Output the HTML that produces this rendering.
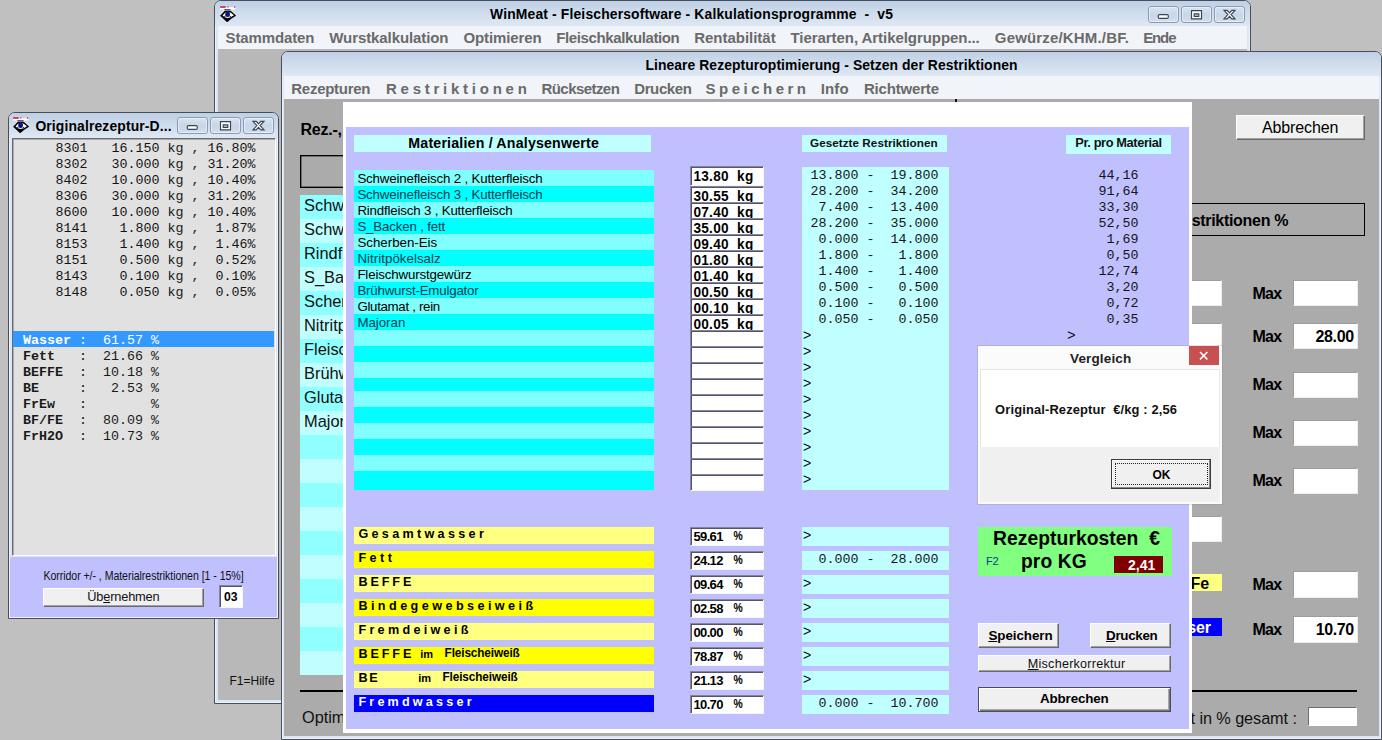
<!DOCTYPE html>
<html lang="de">
<head>
<meta charset="utf-8">
<title>WinMeat - Fleischersoftware - Kalkulationsprogramme - v5</title>
<style>
html,body{margin:0;padding:0}
body{width:1382px;height:740px;overflow:hidden;background:#c0c0c0;position:relative;font-family:"Liberation Sans",sans-serif}
div,span.t,svg{position:absolute;box-sizing:border-box}
.t{white-space:pre;line-height:1;font-family:"Liberation Sans",sans-serif}
.m{font-family:"Liberation Mono",monospace}
.win{border:1px solid #474e5c;border-radius:7px 7px 0 0;background:#dbe6f4;box-shadow:inset 0 0 0 1px #eef3fa}
.wb{border:1px solid #8a9cb5;border-radius:3px;background:linear-gradient(#d9e4f1,#c8d6e8 50%,#d2deed);box-shadow:inset 0 0 0 1px rgba(255,255,255,.45)}
.inp{background:#fff;border:1px solid;border-color:#85859c #f6f6fa #f6f6fa #85859c;box-shadow:inset 1px 1px 0 #55556a}
.fl{background:#fff;border:1px solid;border-color:#9c9c9c #ececec #ececec #9c9c9c}
.btn{background:#f0f0f0;border:1px solid;border-color:#fff #6a6a6a #6a6a6a #fff;box-shadow:inset -1px -1px 0 #a0a0a0}
u{text-decoration:underline}

</style>
</head>
<body>
<div id="win-main" style="left:0;top:0">
<div class="win" style="left:214px;top:0;width:1037px;height:704px"></div>
<div style="left:215px;top:1px;width:1035px;height:25px;background:linear-gradient(#bfd0e5,#dfe8f4);border-radius:6px 6px 0 0"></div>
<div style="left:218px;top:26px;width:1029px;height:23px;background:#f1f4f9;"></div>
<div style="left:218px;top:49px;width:1029px;height:651px;background:#b8b8b8;"></div>
<svg style="left:219.6px;top:5.5px" width="16.4" height="16.4" viewBox="0 0 16.4 16.4"><rect x="0" y="1.3" width="15.4" height="2.3" fill="#fff"/><path d="M0.1 1h5.6M7.4 0.8h1.1" stroke="#cf1230" stroke-width="1.3"/><path d="M14.7 0.2v1.7" stroke="#cf1230" stroke-width="0.9"/><rect x="4.3" y="3.4" width="6.2" height="1" fill="#000"/><path d="M0.1 9.7 L4.6 4.9 L11 4.9 L16.2 9.7 L11 13 L7.2 16.3 L3.6 13Z" fill="#000"/><path d="M2.6 9.6 Q4.5 6.3 7.5 5.7 Q11 6.2 13.9 9.2 Q11 11.7 7.4 11.9 Q4.6 11.8 2.6 9.6Z" fill="#fff"/><path d="M1.2 7.2l1.1-1.1M3.3 5l1-1M12.2 4.6l1 1M14.2 6.6l1 1" stroke="#dbe5f2" stroke-width="1.1"/><ellipse cx="7.6" cy="8.3" rx="2.4" ry="2.8" fill="#10108c"/><path d="M4.2 10.4h1.2M9.8 10.6h1.3" stroke="#000" stroke-width="0.9"/></svg>
<span class="t" style="left:490px;top:8.33px;font-size:13.9px;font-weight:700;letter-spacing:0.152px;">WinMeat - Fleischersoftware - Kalkulationsprogramme  -  v5</span>
<div class="wb" style="left:1148px;top:5.8px;width:31px;height:17px"></div>
<div class="wb" style="left:1181px;top:5.8px;width:31px;height:17px"></div>
<div class="wb" style="left:1214px;top:5.8px;width:31px;height:17px"></div>
<svg style="left:1148px;top:5.8px" width="97" height="17" viewBox="0 0 97 17"><rect x="10.3" y="8.6" width="10" height="3.8" rx="1.2" stroke="#3a4452" stroke-width="1.15" fill="#fff"/><path d="M43.5 4.6h10v8.2h-10z M46.2 7.8v2.6h4.6v-2.6z" fill-rule="evenodd" stroke="#3a4452" stroke-width="1.15" fill="#fff"/><path d="M76 4.4h3.2l2.3 2.5l2.3-2.5h3.2l-3.9 4.2l3.9 4.2h-3.2l-2.3-2.5l-2.3 2.5h-3.2l3.9-4.2z" stroke="#3a4452" stroke-width="1.15" fill="#fff"/></svg>
<span class="t" style="left:225.5px;top:30.00px;font-size:15px;font-weight:700;color:#6a6a6a;letter-spacing:-0.115px;">Stammdaten</span>
<span class="t" style="left:329.3px;top:30.00px;font-size:15px;font-weight:700;color:#6a6a6a;letter-spacing:-0.093px;">Wurstkalkulation</span>
<span class="t" style="left:463.5px;top:30.00px;font-size:15px;font-weight:700;color:#6a6a6a;letter-spacing:-0.110px;">Optimieren</span>
<span class="t" style="left:556.2px;top:30.00px;font-size:15px;font-weight:700;color:#6a6a6a;letter-spacing:-0.379px;">Fleischkalkulation</span>
<span class="t" style="left:694.2px;top:30.00px;font-size:15px;font-weight:700;color:#6a6a6a;letter-spacing:-0.017px;">Rentabilität</span>
<span class="t" style="left:790.5px;top:30.00px;font-size:15px;font-weight:700;color:#6a6a6a;letter-spacing:-0.059px;">Tierarten, Artikelgruppen...</span>
<span class="t" style="left:994.8px;top:30.00px;font-size:15px;font-weight:700;color:#6a6a6a;letter-spacing:0.168px;">Gewürze/KHM./BF.</span>
<span class="t" style="left:1143.2px;top:30.00px;font-size:15px;font-weight:700;color:#6a6a6a;letter-spacing:-1.129px;">Ende</span>
<span class="t" style="left:229.4px;top:674.94px;font-size:12px;color:#111;letter-spacing:0.024px;">F1=Hilfe</span>
</div>
<div id="win-optimierung" style="left:0;top:0">
<div class="win" style="left:281px;top:50.8px;width:1100.6px;height:689.2px"></div>
<div style="left:282px;top:51.8px;width:1098.6px;height:24.2px;background:linear-gradient(#bfd0e5,#dfe8f4);border-radius:6px 6px 0 0"></div>
<div style="left:284px;top:76px;width:1094.6px;height:23px;background:#f1f4f9;"></div>
<div style="left:284px;top:99px;width:1094.6px;height:637.4px;background:#ababab;"></div>
<span class="t" style="left:645.4px;top:58.93px;font-size:13.9px;font-weight:700;letter-spacing:0.074px;">Lineare Rezepturoptimierung - Setzen der Restriktionen</span>
<span class="t" style="left:291.3px;top:80.50px;font-size:15px;font-weight:700;color:#6a6a6a;letter-spacing:-0.276px;">Rezepturen</span>
<span class="t" style="left:386px;top:80.50px;font-size:15px;font-weight:700;color:#6a6a6a;letter-spacing:-0.211px;">R e s t r i k t i o n e n</span>
<span class="t" style="left:541.5px;top:80.50px;font-size:15px;font-weight:700;color:#6a6a6a;letter-spacing:-0.564px;">Rücksetzen</span>
<span class="t" style="left:634.2px;top:80.50px;font-size:15px;font-weight:700;color:#6a6a6a;letter-spacing:-0.372px;">Drucken</span>
<span class="t" style="left:705.5px;top:80.50px;font-size:15px;font-weight:700;color:#6a6a6a;letter-spacing:-0.336px;">S p e i c h e r n</span>
<span class="t" style="left:820.7px;top:80.50px;font-size:15px;font-weight:700;color:#6a6a6a;letter-spacing:0.133px;">Info</span>
<span class="t" style="left:863.9px;top:80.50px;font-size:15px;font-weight:700;color:#6a6a6a;letter-spacing:-0.176px;">Richtwerte</span>
<div style="left:955px;top:99px;width:2px;height:3px;background:#111;"></div>
<span class="t" style="left:300.4px;top:122.36px;font-size:16px;font-weight:700;letter-spacing:-0.214px;">Rez.-,</span>
<div class="btn" style="left:1236px;top:115px;width:129px;height:25px"></div>
<span class="t" style="left:1262px;top:119.86px;font-size:16px;letter-spacing:-0.136px;">Abbrechen</span>
<div style="left:300px;top:155px;width:700px;height:33px;background:transparent;border:1px solid #000;box-shadow:inset 0 0 0 0.5px #333"></div>
<div style="left:300px;top:195px;width:600px;height:24px;background:#90ffff;"></div>
<span class="t" style="left:304px;top:196.82px;font-size:16.4px;color:#111;">Schweinefleisch 2 , Kutterfleisch</span>
<div style="left:300px;top:219px;width:600px;height:24px;background:#c0ffff;"></div>
<span class="t" style="left:304px;top:220.82px;font-size:16.4px;color:#111;">Schweinefleisch 3 , Kutterfleisch</span>
<div style="left:300px;top:243px;width:600px;height:24px;background:#90ffff;"></div>
<span class="t" style="left:304px;top:244.82px;font-size:16.4px;color:#111;">Rindfleisch 3 , Kutterfleisch</span>
<div style="left:300px;top:267px;width:600px;height:24px;background:#c0ffff;"></div>
<span class="t" style="left:304px;top:268.82px;font-size:16.4px;color:#111;">S_Backen , fett</span>
<div style="left:300px;top:291px;width:600px;height:24px;background:#90ffff;"></div>
<span class="t" style="left:304px;top:292.82px;font-size:16.4px;color:#111;">Scherben-Eis</span>
<div style="left:300px;top:315px;width:600px;height:24px;background:#c0ffff;"></div>
<span class="t" style="left:304px;top:316.82px;font-size:16.4px;color:#111;">Nitritpökelsalz</span>
<div style="left:300px;top:339px;width:600px;height:24px;background:#90ffff;"></div>
<span class="t" style="left:304px;top:340.82px;font-size:16.4px;color:#111;">Fleischwurstgewürz</span>
<div style="left:300px;top:363px;width:600px;height:24px;background:#c0ffff;"></div>
<span class="t" style="left:304px;top:364.82px;font-size:16.4px;color:#111;">Brühwurst-Emulgator</span>
<div style="left:300px;top:387px;width:600px;height:24px;background:#90ffff;"></div>
<span class="t" style="left:304px;top:388.82px;font-size:16.4px;color:#111;">Glutamat , rein</span>
<div style="left:300px;top:411px;width:600px;height:24px;background:#c0ffff;"></div>
<span class="t" style="left:304px;top:412.82px;font-size:16.4px;color:#111;">Majoran</span>
<div style="left:300px;top:435px;width:600px;height:24px;background:#90ffff;"></div>
<div style="left:300px;top:459px;width:600px;height:24px;background:#c0ffff;"></div>
<div style="left:300px;top:483px;width:600px;height:24px;background:#90ffff;"></div>
<div style="left:300px;top:507px;width:600px;height:24px;background:#c0ffff;"></div>
<div style="left:300px;top:531px;width:600px;height:24px;background:#90ffff;"></div>
<div style="left:300px;top:555px;width:600px;height:24px;background:#c0ffff;"></div>
<div style="left:300px;top:579px;width:600px;height:24px;background:#90ffff;"></div>
<div style="left:300px;top:603px;width:600px;height:24px;background:#c0ffff;"></div>
<div style="left:300px;top:627px;width:600px;height:24px;background:#90ffff;"></div>
<div style="left:300px;top:651px;width:600px;height:24px;background:#c0ffff;"></div>
<div style="left:900px;top:203px;width:465px;height:33px;background:transparent;border:1px solid #000"></div>
<span class="t" style="left:1171.8px;top:213.06px;font-size:16px;font-weight:700;letter-spacing:-0.302px;">Restriktionen %</span>
<div class="fl" style="left:1157px;top:280.3px;width:64.5px;height:26px"></div>
<span class="t" style="left:1252.4px;top:285.86px;font-size:16px;font-weight:700;letter-spacing:-0.663px;">Max</span>
<div class="fl" style="left:1292.6px;top:280.3px;width:65px;height:26px"></div>
<div class="fl" style="left:1157px;top:323.3px;width:64.5px;height:26px"></div>
<span class="t" style="left:1252.4px;top:328.86px;font-size:16px;font-weight:700;letter-spacing:-0.663px;">Max</span>
<div class="fl" style="left:1292.6px;top:323.3px;width:65px;height:26px"></div>
<div class="fl" style="left:1157px;top:371.6px;width:64.5px;height:26px"></div>
<span class="t" style="left:1252.4px;top:376.86px;font-size:16px;font-weight:700;letter-spacing:-0.663px;">Max</span>
<div class="fl" style="left:1292.6px;top:371.6px;width:65px;height:26px"></div>
<div class="fl" style="left:1157px;top:419.8px;width:64.5px;height:26px"></div>
<span class="t" style="left:1252.4px;top:424.86px;font-size:16px;font-weight:700;letter-spacing:-0.663px;">Max</span>
<div class="fl" style="left:1292.6px;top:419.8px;width:65px;height:26px"></div>
<div class="fl" style="left:1157px;top:467.6px;width:64.5px;height:26px"></div>
<span class="t" style="left:1252.4px;top:472.86px;font-size:16px;font-weight:700;letter-spacing:-0.663px;">Max</span>
<div class="fl" style="left:1292.6px;top:467.6px;width:65px;height:26px"></div>
<div class="fl" style="left:1157px;top:515.5px;width:64.5px;height:26px"></div>
<span class="t" style="left:1315.5px;top:328.86px;font-size:16px;font-weight:700;letter-spacing:-0.337px;">28.00</span>
<div style="left:1100px;top:573.5px;width:121.5px;height:17.5px;background:#ffff80;"></div>
<span class="t" style="left:1190.6px;top:575.96px;font-size:16px;font-weight:700;">Fe</span>
<div style="left:1100px;top:618.4px;width:121.5px;height:17.4px;background:#0000ff;"></div>
<span class="t" style="left:1109px;top:620.06px;font-size:16px;font-weight:700;color:#fff;letter-spacing:-0.117px;">Fremdwasser</span>
<span class="t" style="left:1252.4px;top:576.76px;font-size:16px;font-weight:700;letter-spacing:-0.663px;">Max</span>
<div class="fl" style="left:1292.6px;top:571px;width:65px;height:27px"></div>
<span class="t" style="left:1252.4px;top:621.66px;font-size:16px;font-weight:700;letter-spacing:-0.663px;">Max</span>
<div class="fl" style="left:1292.6px;top:616px;width:65px;height:27px"></div>
<span class="t" style="left:1315.7px;top:621.66px;font-size:16px;font-weight:700;letter-spacing:-0.387px;">10.70</span>
<div style="left:300px;top:690px;width:1057px;height:2.4px;background:#000;"></div>
<span class="t" style="left:302px;top:709.20px;font-size:16.3px;color:#111;">Optim</span>
<span class="t" style="left:1190.5px;top:709.60px;font-size:16.3px;color:#111;letter-spacing:-0.085px;">t in % gesamt :</span>
<div class="fl" style="left:1308px;top:707.4px;width:49px;height:18.4px;border-color:#6e6e6e #fff #fff #6e6e6e"></div>
</div>
<div id="panel-restriktionen" style="left:0;top:0">
<div style="left:343px;top:102px;width:849px;height:631px;background:#fff;"></div>
<div style="left:346px;top:127px;width:843px;height:602.4px;background:#c0c0ff;"></div>
<div style="left:354px;top:135px;width:297px;height:16.8px;background:#c0ffff;"></div>
<span class="t" style="left:408.3px;top:136.38px;font-size:14.2px;font-weight:700;letter-spacing:0.190px;">Materialien / Analysenwerte</span>
<div style="left:802px;top:135px;width:145px;height:17px;background:#c0ffff;"></div>
<span class="t" style="left:810px;top:136.70px;font-size:11.7px;font-weight:700;color:#111;letter-spacing:0.045px;">Gesetzte Restriktionen</span>
<div style="left:1066px;top:135px;width:105px;height:18.5px;background:#c0ffff;"></div>
<span class="t" style="left:1075.3px;top:136.96px;font-size:12.8px;font-weight:700;color:#111;letter-spacing:-0.384px;">Pr. pro Material</span>
<div style="left:354px;top:170px;width:300px;height:16px;background:#80ffff;"></div>
<span class="t" style="left:357.4px;top:171.84px;font-size:13.3px;letter-spacing:-0.171px;">Schweinefleisch 2 , Kutterfleisch</span>
<div style="left:354px;top:186px;width:300px;height:16px;background:#00ffff;"></div>
<span class="t" style="left:357.4px;top:187.84px;font-size:13.3px;color:#053a52;letter-spacing:-0.171px;">Schweinefleisch 3 , Kutterfleisch</span>
<div style="left:354px;top:202px;width:300px;height:16px;background:#80ffff;"></div>
<span class="t" style="left:357.4px;top:203.84px;font-size:13.3px;letter-spacing:-0.181px;">Rindfleisch 3 , Kutterfleisch</span>
<div style="left:354px;top:218px;width:300px;height:16px;background:#00ffff;"></div>
<span class="t" style="left:357.4px;top:219.84px;font-size:13.3px;color:#053a52;letter-spacing:-0.163px;">S_Backen , fett</span>
<div style="left:354px;top:234px;width:300px;height:16px;background:#80ffff;"></div>
<span class="t" style="left:357.4px;top:235.84px;font-size:13.3px;">Scherben-Eis</span>
<div style="left:354px;top:250px;width:300px;height:16px;background:#00ffff;"></div>
<span class="t" style="left:357.4px;top:251.84px;font-size:13.3px;color:#053a52;letter-spacing:0.038px;">Nitritpökelsalz</span>
<div style="left:354px;top:266px;width:300px;height:16px;background:#80ffff;"></div>
<span class="t" style="left:357.4px;top:267.84px;font-size:13.3px;letter-spacing:-0.151px;">Fleischwurstgewürz</span>
<div style="left:354px;top:282px;width:300px;height:16px;background:#00ffff;"></div>
<span class="t" style="left:357.4px;top:283.84px;font-size:13.3px;color:#053a52;letter-spacing:-0.199px;">Brühwurst-Emulgator</span>
<div style="left:354px;top:298px;width:300px;height:16px;background:#80ffff;"></div>
<span class="t" style="left:357.4px;top:299.84px;font-size:13.3px;letter-spacing:-0.315px;">Glutamat , rein</span>
<div style="left:354px;top:314px;width:300px;height:16px;background:#00ffff;"></div>
<span class="t" style="left:357.4px;top:315.84px;font-size:13.3px;color:#053a52;letter-spacing:-0.024px;">Majoran</span>
<div style="left:354px;top:330px;width:300px;height:16px;background:#80ffff;"></div>
<div style="left:354px;top:346px;width:300px;height:16px;background:#00ffff;"></div>
<div style="left:354px;top:362px;width:300px;height:16px;background:#80ffff;"></div>
<div style="left:354px;top:378px;width:300px;height:12.8px;background:#00ffff;"></div>
<div style="left:354px;top:390.8px;width:300px;height:16px;background:#80ffff;"></div>
<div style="left:354px;top:406.8px;width:300px;height:16px;background:#00ffff;"></div>
<div style="left:354px;top:422.8px;width:300px;height:16px;background:#80ffff;"></div>
<div style="left:354px;top:438.8px;width:300px;height:16px;background:#00ffff;"></div>
<div style="left:354px;top:454.8px;width:300px;height:16px;background:#80ffff;"></div>
<div style="left:354px;top:470.8px;width:300px;height:19.2px;background:#00ffff;"></div>
<div class="inp" style="left:690.4px;top:166px;width:73.2px;height:20px;overflow:hidden"></div>
<span class="t" style="left:693.4px;top:169.79px;font-size:13.6px;font-weight:700;letter-spacing:0.295px;transform-origin:0 11.51px;transform:scaleY(1.1);">13.80  kg</span>
<div class="inp" style="left:690.4px;top:186px;width:73.2px;height:19px;overflow:hidden"></div>
<span class="t" style="left:693.4px;top:189.79px;font-size:13.6px;font-weight:700;letter-spacing:0.295px;transform-origin:0 11.51px;transform:scaleY(1.1);">30.55  kg</span>
<div class="inp" style="left:690.4px;top:202px;width:73.2px;height:19px;overflow:hidden"></div>
<span class="t" style="left:693.4px;top:205.79px;font-size:13.6px;font-weight:700;letter-spacing:0.295px;transform-origin:0 11.51px;transform:scaleY(1.1);">07.40  kg</span>
<div class="inp" style="left:690.4px;top:218px;width:73.2px;height:19px;overflow:hidden"></div>
<span class="t" style="left:693.4px;top:221.79px;font-size:13.6px;font-weight:700;letter-spacing:0.295px;transform-origin:0 11.51px;transform:scaleY(1.1);">35.00  kg</span>
<div class="inp" style="left:690.4px;top:234px;width:73.2px;height:19px;overflow:hidden"></div>
<span class="t" style="left:693.4px;top:237.79px;font-size:13.6px;font-weight:700;letter-spacing:0.295px;transform-origin:0 11.51px;transform:scaleY(1.1);">09.40  kg</span>
<div class="inp" style="left:690.4px;top:250px;width:73.2px;height:19px;overflow:hidden"></div>
<span class="t" style="left:693.4px;top:253.79px;font-size:13.6px;font-weight:700;letter-spacing:0.295px;transform-origin:0 11.51px;transform:scaleY(1.1);">01.80  kg</span>
<div class="inp" style="left:690.4px;top:266px;width:73.2px;height:19px;overflow:hidden"></div>
<span class="t" style="left:693.4px;top:269.79px;font-size:13.6px;font-weight:700;letter-spacing:0.295px;transform-origin:0 11.51px;transform:scaleY(1.1);">01.40  kg</span>
<div class="inp" style="left:690.4px;top:282px;width:73.2px;height:19px;overflow:hidden"></div>
<span class="t" style="left:693.4px;top:285.79px;font-size:13.6px;font-weight:700;letter-spacing:0.295px;transform-origin:0 11.51px;transform:scaleY(1.1);">00.50  kg</span>
<div class="inp" style="left:690.4px;top:298px;width:73.2px;height:19px;overflow:hidden"></div>
<span class="t" style="left:693.4px;top:301.79px;font-size:13.6px;font-weight:700;letter-spacing:0.295px;transform-origin:0 11.51px;transform:scaleY(1.1);">00.10  kg</span>
<div class="inp" style="left:690.4px;top:314px;width:73.2px;height:19px;overflow:hidden"></div>
<span class="t" style="left:693.4px;top:317.79px;font-size:13.6px;font-weight:700;letter-spacing:0.295px;transform-origin:0 11.51px;transform:scaleY(1.1);">00.05  kg</span>
<div class="inp" style="left:690.4px;top:330px;width:73.2px;height:19px;overflow:hidden"></div>
<div class="inp" style="left:690.4px;top:346px;width:73.2px;height:19px;overflow:hidden"></div>
<div class="inp" style="left:690.4px;top:362px;width:73.2px;height:19px;overflow:hidden"></div>
<div class="inp" style="left:690.4px;top:378px;width:73.2px;height:19px;overflow:hidden"></div>
<div class="inp" style="left:690.4px;top:394px;width:73.2px;height:19px;overflow:hidden"></div>
<div class="inp" style="left:690.4px;top:410px;width:73.2px;height:19px;overflow:hidden"></div>
<div class="inp" style="left:690.4px;top:426px;width:73.2px;height:19px;overflow:hidden"></div>
<div class="inp" style="left:690.4px;top:442px;width:73.2px;height:19px;overflow:hidden"></div>
<div class="inp" style="left:690.4px;top:458px;width:73.2px;height:19px;overflow:hidden"></div>
<div class="inp" style="left:690.4px;top:474px;width:73.2px;height:16.6px;overflow:hidden"></div>
<div style="left:802px;top:166.7px;width:147px;height:322.9px;background:#c0ffff;"></div>
<span class="t m" style="left:802.5px;top:168.78px;font-size:13.333px;color:#151515;"> 13.800 -  19.800</span>
<span class="t m" style="left:1098.6px;top:168.78px;font-size:13.333px;color:#151515;">44,16</span>
<span class="t m" style="left:802.5px;top:184.78px;font-size:13.333px;color:#151515;"> 28.200 -  34.200</span>
<span class="t m" style="left:1098.6px;top:184.78px;font-size:13.333px;color:#151515;">91,64</span>
<span class="t m" style="left:802.5px;top:200.78px;font-size:13.333px;color:#151515;">  7.400 -  13.400</span>
<span class="t m" style="left:1098.6px;top:200.78px;font-size:13.333px;color:#151515;">33,30</span>
<span class="t m" style="left:802.5px;top:216.78px;font-size:13.333px;color:#151515;"> 28.200 -  35.000</span>
<span class="t m" style="left:1098.6px;top:216.78px;font-size:13.333px;color:#151515;">52,50</span>
<span class="t m" style="left:802.5px;top:232.78px;font-size:13.333px;color:#151515;">  0.000 -  14.000</span>
<span class="t m" style="left:1098.6px;top:232.78px;font-size:13.333px;color:#151515;"> 1,69</span>
<span class="t m" style="left:802.5px;top:248.78px;font-size:13.333px;color:#151515;">  1.800 -   1.800</span>
<span class="t m" style="left:1098.6px;top:248.78px;font-size:13.333px;color:#151515;"> 0,50</span>
<span class="t m" style="left:802.5px;top:264.78px;font-size:13.333px;color:#151515;">  1.400 -   1.400</span>
<span class="t m" style="left:1098.6px;top:264.78px;font-size:13.333px;color:#151515;">12,74</span>
<span class="t m" style="left:802.5px;top:280.78px;font-size:13.333px;color:#151515;">  0.500 -   0.500</span>
<span class="t m" style="left:1098.6px;top:280.78px;font-size:13.333px;color:#151515;"> 3,20</span>
<span class="t m" style="left:802.5px;top:296.78px;font-size:13.333px;color:#151515;">  0.100 -   0.100</span>
<span class="t m" style="left:1098.6px;top:296.78px;font-size:13.333px;color:#151515;"> 0,72</span>
<span class="t m" style="left:802.5px;top:312.78px;font-size:13.333px;color:#151515;">  0.050 -   0.050</span>
<span class="t m" style="left:1098.6px;top:312.78px;font-size:13.333px;color:#151515;"> 0,35</span>
<span class="t m" style="left:802.8px;top:328.69px;font-size:14.5px;color:#111;">&gt;</span>
<span class="t m" style="left:802.8px;top:344.69px;font-size:14.5px;color:#111;">&gt;</span>
<span class="t m" style="left:802.8px;top:360.69px;font-size:14.5px;color:#111;">&gt;</span>
<span class="t m" style="left:802.8px;top:376.69px;font-size:14.5px;color:#111;">&gt;</span>
<span class="t m" style="left:802.8px;top:392.69px;font-size:14.5px;color:#111;">&gt;</span>
<span class="t m" style="left:802.8px;top:408.69px;font-size:14.5px;color:#111;">&gt;</span>
<span class="t m" style="left:802.8px;top:424.69px;font-size:14.5px;color:#111;">&gt;</span>
<span class="t m" style="left:802.8px;top:440.69px;font-size:14.5px;color:#111;">&gt;</span>
<span class="t m" style="left:802.8px;top:456.69px;font-size:14.5px;color:#111;">&gt;</span>
<span class="t m" style="left:802.8px;top:472.69px;font-size:14.5px;color:#111;">&gt;</span>
<span class="t m" style="left:1067px;top:328.69px;font-size:14.5px;color:#111;">&gt;</span>
<div style="left:354px;top:527px;width:300px;height:17.2px;background:#ffff80;"></div>
<span class="t" style="left:358.4px;top:527.73px;font-size:12.6px;font-weight:700;letter-spacing:-0.091px;">G e s a m t w a s s e r</span>
<div class="inp" style="left:690px;top:527.3px;width:74px;height:18.6px"></div>
<span class="t" style="left:693.5px;top:529.90px;font-size:13px;font-weight:700;letter-spacing:-0.662px;">59.61</span>
<span class="t" style="left:733.6px;top:532.10px;font-size:10.4px;font-weight:700;letter-spacing:-0.450px;transform-origin:0 8.80px;transform:scaleY(1.15);">%</span>
<div style="left:802px;top:526.7px;width:147px;height:19.3px;background:#c0ffff;"></div>
<span class="t m" style="left:802.8px;top:529.29px;font-size:14.5px;color:#111;">&gt;</span>
<div style="left:354px;top:551px;width:300px;height:17.2px;background:#ffff00;"></div>
<span class="t" style="left:358.4px;top:551.73px;font-size:12.6px;font-weight:700;">F e t t</span>
<div class="inp" style="left:690px;top:551.3px;width:74px;height:18.6px"></div>
<span class="t" style="left:693.5px;top:553.90px;font-size:13px;font-weight:700;letter-spacing:-0.662px;">24.12</span>
<span class="t" style="left:733.6px;top:556.10px;font-size:10.4px;font-weight:700;letter-spacing:-0.450px;transform-origin:0 8.80px;transform:scaleY(1.15);">%</span>
<div style="left:802px;top:550.7px;width:147px;height:19.3px;background:#c0ffff;"></div>
<span class="t m" style="left:802.5px;top:552.78px;font-size:13.333px;color:#151515;">  0.000 -  28.000</span>
<div style="left:354px;top:575px;width:300px;height:17.2px;background:#ffff80;"></div>
<span class="t" style="left:358.4px;top:575.73px;font-size:12.6px;font-weight:700;letter-spacing:-0.298px;">B E F F E</span>
<div class="inp" style="left:690px;top:575.3px;width:74px;height:18.6px"></div>
<span class="t" style="left:693.5px;top:577.90px;font-size:13px;font-weight:700;letter-spacing:-0.662px;">09.64</span>
<span class="t" style="left:733.6px;top:580.10px;font-size:10.4px;font-weight:700;letter-spacing:-0.450px;transform-origin:0 8.80px;transform:scaleY(1.15);">%</span>
<div style="left:802px;top:574.7px;width:147px;height:19.3px;background:#c0ffff;"></div>
<span class="t m" style="left:802.8px;top:577.29px;font-size:14.5px;color:#111;">&gt;</span>
<div style="left:354px;top:599px;width:300px;height:17.2px;background:#ffff00;"></div>
<span class="t" style="left:358.4px;top:599.73px;font-size:12.6px;font-weight:700;letter-spacing:-0.027px;">B i n d e g e w e b s e i w e i ß</span>
<div class="inp" style="left:690px;top:599.3px;width:74px;height:18.6px"></div>
<span class="t" style="left:693.5px;top:601.90px;font-size:13px;font-weight:700;letter-spacing:-0.662px;">02.58</span>
<span class="t" style="left:733.6px;top:604.10px;font-size:10.4px;font-weight:700;letter-spacing:-0.450px;transform-origin:0 8.80px;transform:scaleY(1.15);">%</span>
<div style="left:802px;top:598.7px;width:147px;height:19.3px;background:#c0ffff;"></div>
<span class="t m" style="left:802.8px;top:601.29px;font-size:14.5px;color:#111;">&gt;</span>
<div style="left:354px;top:623px;width:300px;height:17.2px;background:#ffff80;"></div>
<span class="t" style="left:358.4px;top:623.73px;font-size:12.6px;font-weight:700;letter-spacing:-0.099px;">F r e m d e i w e i ß</span>
<div class="inp" style="left:690px;top:623.3px;width:74px;height:18.6px"></div>
<span class="t" style="left:693.5px;top:625.90px;font-size:13px;font-weight:700;letter-spacing:-0.662px;">00.00</span>
<span class="t" style="left:733.6px;top:628.10px;font-size:10.4px;font-weight:700;letter-spacing:-0.450px;transform-origin:0 8.80px;transform:scaleY(1.15);">%</span>
<div style="left:802px;top:622.7px;width:147px;height:19.3px;background:#c0ffff;"></div>
<span class="t m" style="left:802.8px;top:625.29px;font-size:14.5px;color:#111;">&gt;</span>
<div style="left:354px;top:647px;width:300px;height:17.2px;background:#ffff00;"></div>
<span class="t" style="left:358.4px;top:647.73px;font-size:12.6px;font-weight:700;letter-spacing:-0.298px;">B E F F E</span>
<span class="t" style="left:420.2px;top:649.09px;font-size:11px;font-weight:700;">im</span>
<span class="t" style="left:444.6px;top:648.41px;font-size:11.8px;font-weight:700;letter-spacing:-0.127px;transform-origin:0 9.99px;transform:scaleY(1.07);">Fleischeiweiß</span>
<div class="inp" style="left:690px;top:647.3px;width:74px;height:18.6px"></div>
<span class="t" style="left:693.5px;top:649.90px;font-size:13px;font-weight:700;letter-spacing:-0.662px;">78.87</span>
<span class="t" style="left:733.6px;top:652.10px;font-size:10.4px;font-weight:700;letter-spacing:-0.450px;transform-origin:0 8.80px;transform:scaleY(1.15);">%</span>
<div style="left:802px;top:646.7px;width:147px;height:19.3px;background:#c0ffff;"></div>
<span class="t m" style="left:802.8px;top:649.29px;font-size:14.5px;color:#111;">&gt;</span>
<div style="left:354px;top:671px;width:300px;height:17.2px;background:#ffff80;"></div>
<span class="t" style="left:358.4px;top:671.73px;font-size:12.6px;font-weight:700;letter-spacing:-0.900px;">B E</span>
<span class="t" style="left:418.2px;top:673.09px;font-size:11px;font-weight:700;">im</span>
<span class="t" style="left:442.5px;top:672.41px;font-size:11.8px;font-weight:700;letter-spacing:-0.118px;transform-origin:0 9.99px;transform:scaleY(1.07);">Fleischeiweiß</span>
<div class="inp" style="left:690px;top:671.3px;width:74px;height:18.6px"></div>
<span class="t" style="left:693.5px;top:673.90px;font-size:13px;font-weight:700;letter-spacing:-0.662px;">21.13</span>
<span class="t" style="left:733.6px;top:676.10px;font-size:10.4px;font-weight:700;letter-spacing:-0.450px;transform-origin:0 8.80px;transform:scaleY(1.15);">%</span>
<div style="left:802px;top:670.7px;width:147px;height:19.3px;background:#c0ffff;"></div>
<span class="t m" style="left:802.8px;top:673.29px;font-size:14.5px;color:#111;">&gt;</span>
<div style="left:354px;top:695px;width:300px;height:17.2px;background:#0000ff;"></div>
<span class="t" style="left:358.4px;top:695.73px;font-size:12.6px;font-weight:700;color:#fff;letter-spacing:-0.150px;">F r e m d w a s s e r</span>
<div class="inp" style="left:690px;top:695.3px;width:74px;height:18.6px"></div>
<span class="t" style="left:693.5px;top:697.90px;font-size:13px;font-weight:700;letter-spacing:-0.662px;">10.70</span>
<span class="t" style="left:733.6px;top:700.10px;font-size:10.4px;font-weight:700;letter-spacing:-0.450px;transform-origin:0 8.80px;transform:scaleY(1.15);">%</span>
<div style="left:802px;top:694.7px;width:147px;height:19.3px;background:#c0ffff;"></div>
<span class="t m" style="left:802.5px;top:696.78px;font-size:13.333px;color:#151515;">  0.000 -  10.700</span>
<div style="left:977.7px;top:526.8px;width:193.9px;height:48.8px;background:#80ff80;"></div>
<span class="t" style="left:993px;top:529.36px;font-size:19.3px;font-weight:700;letter-spacing:0.058px;">Rezepturkosten  €</span>
<span class="t" style="left:1021px;top:551.86px;font-size:19.3px;font-weight:700;letter-spacing:0.091px;">pro KG</span>
<span class="t" style="left:986px;top:555.69px;font-size:11px;color:#0a3a9a;letter-spacing:-0.344px;">F2</span>
<div style="left:1113.6px;top:555.8px;width:49.4px;height:17.4px;background:#800000;"></div>
<span class="t" style="left:1128px;top:558.25px;font-size:14px;font-weight:700;color:#fff;letter-spacing:-0.017px;">2,41</span>
<div class="btn" style="left:977.7px;top:623px;width:81.3px;height:24.5px"></div>
<span class="t" style="left:988.4px;top:628.96px;font-size:13.4px;font-weight:700;letter-spacing:-0.069px;"><u>S</u>peichern</span>
<div class="btn" style="left:1089.8px;top:623px;width:81.4px;height:24.5px"></div>
<span class="t" style="left:1106px;top:628.96px;font-size:13.4px;font-weight:700;letter-spacing:-0.299px;"><u>D</u>rucken</span>
<div class="btn" style="left:977.7px;top:655px;width:193.5px;height:16.8px"></div>
<span class="t" style="left:1027.8px;top:658.33px;font-size:12.6px;color:#111;letter-spacing:0.241px;transform-origin:0 10.67px;transform:scaleY(1.05);"><u>M</u>ischerkorrektur</span>
<div style="left:977.7px;top:687px;width:193.5px;height:24.6px;background:#f0f0f0;border:1px solid #4c4c58;box-shadow:inset 1px 1px 0 #fff,inset -1px -1px 0 #777,inset -2px -2px 0 #a8a8a8"></div>
<span class="t" style="left:1040px;top:692.46px;font-size:13.4px;font-weight:700;letter-spacing:-0.144px;">Abbrechen</span>
</div>
<div id="win-originalrezeptur" style="left:0;top:0">
<div class="win" style="left:8px;top:112px;width:270.5px;height:506.5px"></div>
<div style="left:9px;top:113px;width:268.5px;height:25px;background:linear-gradient(#bfd0e5,#dfe8f4);border-radius:6px 6px 0 0"></div>
<svg style="left:12.7px;top:116.6px" width="16.4" height="16.4" viewBox="0 0 16.4 16.4"><rect x="0" y="1.3" width="15.4" height="2.3" fill="#fff"/><path d="M0.1 1h5.6M7.4 0.8h1.1" stroke="#cf1230" stroke-width="1.3"/><path d="M14.7 0.2v1.7" stroke="#cf1230" stroke-width="0.9"/><rect x="4.3" y="3.4" width="6.2" height="1" fill="#000"/><path d="M0.1 9.7 L4.6 4.9 L11 4.9 L16.2 9.7 L11 13 L7.2 16.3 L3.6 13Z" fill="#000"/><path d="M2.6 9.6 Q4.5 6.3 7.5 5.7 Q11 6.2 13.9 9.2 Q11 11.7 7.4 11.9 Q4.6 11.8 2.6 9.6Z" fill="#fff"/><path d="M1.2 7.2l1.1-1.1M3.3 5l1-1M12.2 4.6l1 1M14.2 6.6l1 1" stroke="#dbe5f2" stroke-width="1.1"/><ellipse cx="7.6" cy="8.3" rx="2.4" ry="2.8" fill="#10108c"/><path d="M4.2 10.4h1.2M9.8 10.6h1.3" stroke="#000" stroke-width="0.9"/></svg>
<span class="t" style="left:35.4px;top:120.13px;font-size:13.9px;font-weight:700;letter-spacing:0.133px;">Originalrezeptur-D...</span>
<div class="wb" style="left:177px;top:117px;width:31px;height:17px"></div>
<div class="wb" style="left:210px;top:117px;width:31px;height:17px"></div>
<div class="wb" style="left:243px;top:117px;width:31px;height:17px"></div>
<svg style="left:177px;top:117px" width="97" height="17" viewBox="0 0 97 17"><rect x="10.3" y="8.6" width="10" height="3.8" rx="1.2" stroke="#3a4452" stroke-width="1.15" fill="#fff"/><path d="M43.5 4.6h10v8.2h-10z M46.2 7.8v2.6h4.6v-2.6z" fill-rule="evenodd" stroke="#3a4452" stroke-width="1.15" fill="#fff"/><path d="M76 4.4h3.2l2.3 2.5l2.3-2.5h3.2l-3.9 4.2l3.9 4.2h-3.2l-2.3-2.5l-2.3 2.5h-3.2l3.9-4.2z" stroke="#3a4452" stroke-width="1.15" fill="#fff"/></svg>
<div style="left:12px;top:138px;width:264px;height:418px;background:#e1e1e1;border:1px solid;border-color:#6d6d6d #fff #fff #6d6d6d;box-shadow:inset 1px 1px 0 #a9a9a9"></div>
<span class="t m" style="left:15.6px;top:141.58px;font-size:13.333px;color:#151515;">     8301   16.150 kg , 16.80%</span>
<span class="t m" style="left:15.6px;top:157.58px;font-size:13.333px;color:#151515;">     8302   30.000 kg , 31.20%</span>
<span class="t m" style="left:15.6px;top:173.58px;font-size:13.333px;color:#151515;">     8402   10.000 kg , 10.40%</span>
<span class="t m" style="left:15.6px;top:189.58px;font-size:13.333px;color:#151515;">     8306   30.000 kg , 31.20%</span>
<span class="t m" style="left:15.6px;top:205.58px;font-size:13.333px;color:#151515;">     8600   10.000 kg , 10.40%</span>
<span class="t m" style="left:15.6px;top:221.58px;font-size:13.333px;color:#151515;">     8141    1.800 kg ,  1.87%</span>
<span class="t m" style="left:15.6px;top:237.58px;font-size:13.333px;color:#151515;">     8153    1.400 kg ,  1.46%</span>
<span class="t m" style="left:15.6px;top:253.58px;font-size:13.333px;color:#151515;">     8151    0.500 kg ,  0.52%</span>
<span class="t m" style="left:15.6px;top:269.58px;font-size:13.333px;color:#151515;">     8143    0.100 kg ,  0.10%</span>
<span class="t m" style="left:15.6px;top:285.58px;font-size:13.333px;color:#151515;">     8148    0.050 kg ,  0.05%</span>
<div style="left:13px;top:331px;width:261.3px;height:16.2px;background:#3399ff;"></div>
<span class="t m" style="left:23px;top:333.58px;font-size:13.333px;font-weight:700;color:#fff;">Wasser</span>
<span class="t m" style="left:79px;top:333.58px;font-size:13.333px;color:#fff;">:  61.57 %</span>
<span class="t m" style="left:23px;top:349.58px;font-size:13.333px;font-weight:700;color:#1a1a1a;">Fett</span>
<span class="t m" style="left:79px;top:349.58px;font-size:13.333px;color:#1a1a1a;">:  21.66 %</span>
<span class="t m" style="left:23px;top:365.58px;font-size:13.333px;font-weight:700;color:#1a1a1a;">BEFFE</span>
<span class="t m" style="left:79px;top:365.58px;font-size:13.333px;color:#1a1a1a;">:  10.18 %</span>
<span class="t m" style="left:23px;top:381.58px;font-size:13.333px;font-weight:700;color:#1a1a1a;">BE</span>
<span class="t m" style="left:79px;top:381.58px;font-size:13.333px;color:#1a1a1a;">:   2.53 %</span>
<span class="t m" style="left:23px;top:397.58px;font-size:13.333px;font-weight:700;color:#1a1a1a;">FrEw</span>
<span class="t m" style="left:79px;top:397.58px;font-size:13.333px;color:#1a1a1a;">:        %</span>
<span class="t m" style="left:23px;top:413.58px;font-size:13.333px;font-weight:700;color:#1a1a1a;">BF/FE</span>
<span class="t m" style="left:79px;top:413.58px;font-size:13.333px;color:#1a1a1a;">:  80.09 %</span>
<span class="t m" style="left:23px;top:429.58px;font-size:13.333px;font-weight:700;color:#1a1a1a;">FrH2O</span>
<span class="t m" style="left:79px;top:429.58px;font-size:13.333px;color:#1a1a1a;">:  10.73 %</span>
<div style="left:10px;top:557px;width:267px;height:59.5px;background:#c0c0ff;"></div>
<span class="t" style="left:43.4px;top:571.43px;font-size:10.6px;color:#111;letter-spacing:-0.058px;transform-origin:0 8.97px;transform:scaleY(1.17);">Korridor +/- , Materialrestriktionen [1 - 15%]</span>
<div class="btn" style="left:43px;top:588px;width:161.2px;height:19.2px"></div>
<span class="t" style="left:87.3px;top:591.36px;font-size:12.8px;color:#111;letter-spacing:-0.189px;transform-origin:0 10.84px;transform:scaleY(1.05);">Üb<u>e</u>rnehmen</span>
<div class="inp" style="left:219px;top:585px;width:24px;height:23px"></div>
<span class="t" style="left:224px;top:590.97px;font-size:12.2px;font-weight:700;letter-spacing:0.037px;transform-origin:0 10.33px;transform:scaleY(1.12);">03</span>
</div>
<div id="dlg-vergleich" style="left:0;top:0">
<div style="left:977.7px;top:345.6px;width:243.9px;height:158.4px;background:#fbfbfb;box-shadow:0 0 0 1px rgba(120,120,140,.22)"></div>
<div style="left:1189px;top:346px;width:30px;height:18.5px;background:#c75050;"></div>
<svg style="left:1198px;top:350px" width="12" height="12" viewBox="0 0 12 12"><path d="M2 2l7.4 7.4M9.4 2L2 9.4" stroke="#fff" stroke-width="1.5" fill="none"/></svg>
<span class="t" style="left:1070px;top:352.27px;font-size:13.5px;font-weight:700;color:#222;letter-spacing:0.144px;">Vergleich</span>
<div style="left:980px;top:447px;width:240px;height:55px;background:#f0f0f0;"></div>
<div style="left:980px;top:368.8px;width:240px;height:78.2px;background:#fff;border:1px solid #e6e6e6;border-bottom:0"></div>
<span class="t" style="left:995.1px;top:404.28px;font-size:12.9px;font-weight:700;color:#111;letter-spacing:0.146px;">Original-Rezeptur  €/kg : 2,56</span>
<div style="left:1111px;top:459px;width:100.2px;height:29.6px;background:#f0f0f0;border:1px solid #3c3c3c;box-shadow:inset -1px -1px 0 #8a8a8a,inset 1px 1px 0 #fff"></div>
<div style="left:1114.5px;top:462.5px;width:93px;height:22.5px;background:transparent;border:1px dotted #222"></div>
<span class="t" style="left:1152.4px;top:469.24px;font-size:12px;font-weight:700;">OK</span>
</div>
</body>
</html>
